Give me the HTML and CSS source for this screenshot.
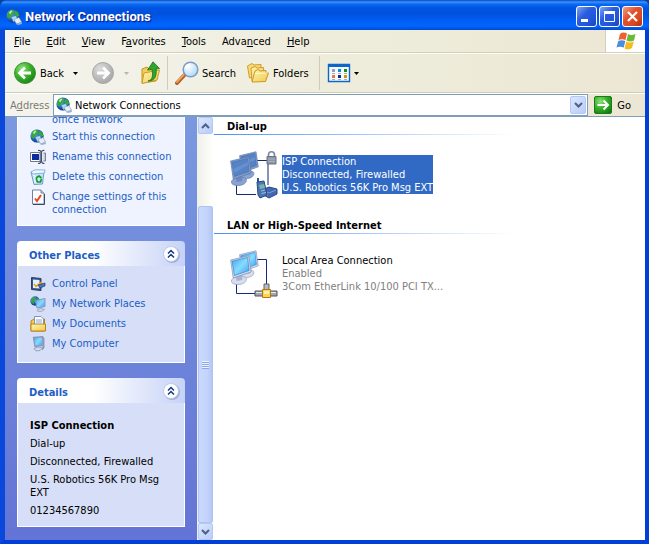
FILE: index.html
```html
<!DOCTYPE html>
<html lang="en">
<head>
<meta charset="utf-8">
<title>Network Connections</title>
<link rel="stylesheet" href="styles.css">
</head>
<body>
<svg class="defs" aria-hidden="true">
  <defs>
    <linearGradient id="gScreen" x1="0" y1="0" x2="1" y2="1"><stop offset="0" stop-color="#3fa4f2"/><stop offset=".5" stop-color="#86dcff"/><stop offset="1" stop-color="#3a9cec"/></linearGradient>
    <linearGradient id="gFolder" x1="0" y1="0" x2="1" y2="1"><stop offset="0" stop-color="#fff6b8"/><stop offset="1" stop-color="#f0c848"/></linearGradient>
    <radialGradient id="gGreen" cx=".35" cy=".3" r=".8"><stop offset="0" stop-color="#8fe07a"/><stop offset=".5" stop-color="#3bb02a"/><stop offset="1" stop-color="#0f7d10"/></radialGradient>
    <radialGradient id="gGray" cx=".35" cy=".3" r=".8"><stop offset="0" stop-color="#dcdcdc"/><stop offset="1" stop-color="#a2a2a2"/></radialGradient>
    <radialGradient id="gGlobe" cx=".3" cy=".3" r=".8"><stop offset="0" stop-color="#8cc8f4"/><stop offset=".5" stop-color="#2464c0"/><stop offset="1" stop-color="#0a2a78"/></radialGradient>
    <radialGradient id="gLens" cx=".35" cy=".3" r=".8"><stop offset="0" stop-color="#ffffff"/><stop offset="1" stop-color="#a8d6fa"/></radialGradient>
    <symbol id="globe" viewBox="0 0 16 16">
      <circle cx="7" cy="7" r="6.600" fill="url(#gGlobe)"/>
      <path d="M2 3 5 .8 8 1 7 3 8 5 5 7 4 10 1 8ZM9 1.500 12 3 13.500 7 11 8 8.500 5Z" fill="#35a83c"/>
      <path d="M3 3.500 5 1.500 6.500 2 4 5.500Z" fill="#c4f0ae"/>
      <path d="M5 8 10 6.500 12 11 7.500 13Z" fill="#a8dcfc" stroke="#4c74ac" stroke-width=".6"/>
      <path d="M8 10.500 13 8.500 15.500 13 10.500 15Z" fill="#e2effb" stroke="#7f96ba" stroke-width=".6"/>
      <path d="M10 15 15.500 13 16 15 12 16Z" fill="#9fb0ca"/>
    </symbol>
    <symbol id="chev" viewBox="0 0 19 19">
      <circle cx="10" cy="10" r="8" fill="#8d9bc9" opacity=".7"/>
      <circle cx="9" cy="9" r="7.500" fill="#fff" stroke="#c0cae8"/>
      <path d="M6 8.500 9 5.500 12 8.500M6 12.500 9 9.500 12 12.500" fill="none" stroke="#15398c" stroke-width="1.500"/>
    </symbol>
    <symbol id="monitor" viewBox="0 0 27 30" preserveAspectRatio="none">
      <path d="M2 25C4 21 17 20 20 23 21 27 16 29.500 10 29.500 4 29.500 1 28 2 25Z" fill="#d8deee" stroke="#98a2c2" stroke-width=".8"/>
      <path d="M7 20 15 19 15 25 8 26Z" fill="#aab4d0"/>
      <path d="M.8 5 23 .8 26 17 4 23Z" fill="#d4dcee" stroke="#8090b4" stroke-width=".8"/>
      <path d="M2.500 6.200 21.500 2.500 23.500 15.500 5.500 20.500Z" fill="url(#gScreen)" stroke="#2f7fc8" stroke-width=".7"/>
    </symbol>
    <symbol id="monitorSel" viewBox="0 0 27 30" preserveAspectRatio="none">
      <path d="M2 25C4 21 17 20 20 23 21 27 16 29.500 10 29.500 4 29.500 1 28 2 25Z" fill="#8aa4d2" stroke="#6580b4" stroke-width=".8"/>
      <path d="M7 20 15 19 15 25 8 26Z" fill="#6c88bc"/>
      <path d="M.8 5 23 .8 26 17 4 23Z" fill="#86a0cc" stroke="#5d78ac" stroke-width=".8"/>
      <path d="M2.500 6.200 21.500 2.500 23.500 15.500 5.500 20.500Z" fill="#5683c6" stroke="#456fb0" stroke-width=".7"/>
      <path d="M4 13 22 6 22.500 9 5 17Z" fill="#6690cf"/>
    </symbol>
  </defs>
</svg>

<header class="titlebar">
  <svg class="i16" aria-hidden="true"><use href="#globe"/></svg>
  <h1>Network Connections</h1>
  <div class="winbtns">
    <button type="button" aria-label="Minimize"><svg viewBox="0 0 19 19"><path d="M4 12H11V15H4Z" fill="#fff"/></svg></button>
    <button type="button" aria-label="Maximize"><svg viewBox="0 0 19 19"><path d="M4.500 5.500H14.500V14.500H4.500Z" fill="none" stroke="#fff"/><path d="M4 4H15V7H4Z" fill="#fff"/></svg></button>
    <button type="button" class="close" aria-label="Close"><svg viewBox="0 0 19 19"><path d="M5 5 14 14M14 5 5 14" stroke="#fff" stroke-width="2.200"/></svg></button>
  </div>
</header>

<div class="frame">
  <div class="menubar">
    <nav class="menu">
      <button type="button"><u>F</u>ile</button>
      <button type="button"><u>E</u>dit</button>
      <button type="button"><u>V</u>iew</button>
      <button type="button">F<u>a</u>vorites</button>
      <button type="button"><u>T</u>ools</button>
      <button type="button">Adva<u>n</u>ced</button>
      <button type="button"><u>H</u>elp</button>
    </nav>
    <div class="brand">
      <svg viewBox="0 0 20 20" aria-hidden="true">
        <path d="M4 3Q7 .5 11 2.500L9.500 9Q6 7.500 2.500 9Z" fill="#ee6030"/>
        <path d="M12 3Q15.500 5 19.500 3L18 9.500Q14 11.500 10.500 9.500Z" fill="#6cb838"/>
        <path d="M2.200 10Q6 8.500 9.300 10L7.800 16.500Q4 15 .5 16.500Z" fill="#4a8ee0"/>
        <path d="M10.300 10.500Q14 12.500 17.800 10.500L16 17Q12.500 19.500 8.500 17.500Z" fill="#f4bc22"/>
      </svg>
    </div>
  </div>

  <div class="toolbar">
    <button type="button" class="tool back">
      <svg class="i24" viewBox="0 0 24 24" aria-hidden="true"><circle cx="12" cy="12" r="10.500" fill="url(#gGreen)" stroke="#3c9434"/><path d="M18 12H7.500M12 6.500 6.500 12 12 17.500" fill="none" stroke="#fff" stroke-width="2.800"/></svg>
      Back
    </button>
    <button type="button" class="drop" aria-label="Back history"><svg viewBox="0 0 5 3"><path d="M0 0H5L2.500 3Z"/></svg></button>
    <button type="button" class="tool forward" aria-label="Forward" disabled>
      <svg class="i24" viewBox="0 0 24 24" aria-hidden="true"><circle cx="12" cy="12" r="10.500" fill="url(#gGray)" stroke="#a8a8a8"/><path d="M6 12H16.500M12 6.500 17.500 12 12 17.500" fill="none" stroke="#fff" stroke-width="2.800"/></svg>
    </button>
    <button type="button" class="drop off" aria-label="Forward history" disabled><svg viewBox="0 0 5 3"><path d="M0 0H5L2.500 3Z"/></svg></button>
    <button type="button" class="tool up" aria-label="Up">
      <svg class="i24" viewBox="0 0 24 24" aria-hidden="true">
        <path d="M3 8 8 6 10 8 17 7 17 20 3 22Z" fill="#f3cf58" stroke="#c79320"/>
        <path d="M5 12 20.500 9 18 19 3 22.500Z" fill="url(#gFolder)" stroke="#cd9b26"/>
        <path d="M9 20C14 19 14 14 13 8.500L8.500 9 14 .8 20.500 7.500 17 8C18 14 16 20.500 9 20Z" fill="#2fa52c" stroke="#157316" stroke-width=".8"/>
      </svg>
    </button>
    <span class="sep"></span>
    <button type="button" class="tool">
      <svg class="i24" viewBox="0 0 24 24" aria-hidden="true">
        <path d="M2 22 9 14.500" stroke="#b4602a" stroke-width="4" stroke-linecap="round"/><path d="M2 21 8.500 14" stroke="#f5a860" stroke-width="1.800" stroke-linecap="round"/>
        <circle cx="15.500" cy="8.500" r="7.300" fill="url(#gLens)" stroke="#8099c4" stroke-width="1.500"/><path d="M11 7Q12 4 15 3.500" stroke="#fff" stroke-width="1.800" fill="none"/>
      </svg>
      Search
    </button>
    <button type="button" class="tool folders">
      <svg class="i24" viewBox="0 0 24 24" aria-hidden="true">
        <path d="M1.500 5 6 2.500 8 4 15 3.500 15 13 3.500 17Z" fill="#f8dc78" stroke="#d09a28"/>
        <path d="M5 7 9 5.500 11 7 17.500 6.500 18 17 6 20Z" fill="url(#gFolder)" stroke="#d09a28"/>
        <path d="M6 21 9 10 12 8.500 14 10 20 9.500 20 12 22.500 12 19.500 20.500Z" fill="url(#gFolder)" stroke="#cf9722"/>
        <path d="M9 12.500 21.500 12" stroke="#fff9d0" fill="none"/>
      </svg>
      Folders
    </button>
    <span class="sep"></span>
    <button type="button" class="tool views" aria-label="Views">
      <svg class="i24" viewBox="0 0 24 24" aria-hidden="true">
        <path d="M1.500 3.500H22.500V20.500H1.500Z" fill="#f4faff" stroke="#0e66c8" stroke-width="1.400"/><path d="M1 3H23V6H1Z" fill="#0e66c8"/>
        <path d="M5 8H8V11H5Z" fill="#9a98d0"/><path d="M11 8H14V11H11Z" fill="#1484e6"/><path d="M17 8H20V11H17Z" fill="#0c960c"/>
        <path d="M5 14H8V17H5Z" fill="#f47440"/><path d="M11 14H14V17H11Z" fill="#08308c"/><path d="M17 14H20V17H17Z" fill="#cc9a08"/>
        <path d="M5 12.500H8M11 12.500H14M17 12.500H20M5 18.500H8M11 18.500H14M17 18.500H20" stroke="#a8acb4"/>
      </svg>
    </button>
    <button type="button" class="drop" aria-label="Choose view"><svg viewBox="0 0 5 3"><path d="M0 0H5L2.500 3Z"/></svg></button>
  </div>

  <form class="addressbar">
    <label for="addr">A<u>d</u>dress</label>
    <div class="combo">
      <svg class="i16" aria-hidden="true"><use href="#globe"/></svg>
      <input id="addr" type="text" value="Network Connections">
      <button type="button" class="sbtn" aria-label="Show addresses"><svg viewBox="0 0 9 6"><path d="M1 1 4.500 4.500 8 1" /></svg></button>
    </div>
    <button type="button" class="go">
      <svg viewBox="0 0 18 18" aria-hidden="true"><rect x=".5" y=".5" width="17" height="17" rx="1.500" fill="url(#gGreen)" stroke="#187c1a"/><path d="M3.500 9H14M9.500 4.500 14 9 9.500 13.500" fill="none" stroke="#fff" stroke-width="2"/></svg>
      Go
    </button>
  </form>

  <div class="content">
    <aside class="sidebar">
      <section class="panel tasks">
        <ul class="links">
          <li class="cut"><a href="#">office network</a></li>
          <li><svg class="i16" aria-hidden="true"><use href="#globe"/></svg><a href="#">Start this connection</a></li>
          <li><svg class="i16" viewBox="0 0 16 16" aria-hidden="true"><path d="M.5 3.500H10V12.500H.5Z" fill="#fff" stroke="#70788c"/><path d="M2 5H9V11H2Z" fill="#0a2c9c"/><path d="M8 1.500Q11 1 11 3.500V12Q11 14.500 8 14.500M14.500 1.500Q11.500 1 11.500 3.500V12Q11.500 14.500 14.500 14.500" fill="none" stroke="#48506a" stroke-width="1.200"/><path d="M13.500 4H15.500V12H13.500" fill="#c4cad8" stroke="#606880" stroke-width=".8"/></svg><a href="#">Rename this connection</a></li>
          <li><svg class="i16" viewBox="0 0 16 16" aria-hidden="true"><path d="M1 3 14 2 12.500 15 4 15.500Z" fill="#c4e4fa" stroke="#6c9cce"/><path d="M1 3 5 .8 15 1 14.500 4 3 5Z" fill="#eef8ff" stroke="#70a4d8" stroke-width=".8"/><path d="M3 6 5 7 5 14" stroke="#fff" fill="none"/><path d="M6.500 11V8.500L9 7 11.500 9M11.500 10 10.500 13 7.500 13 6.500 11" stroke="#189a28" stroke-width="1.700" fill="none"/></svg><a href="#">Delete this connection</a></li>
          <li><svg class="i16" viewBox="0 0 16 16" aria-hidden="true"><path d="M2.500 1H11L14 4V15H2.500Z" fill="#fff" stroke="#7080a8"/><path d="M11 1V4H14" fill="#c8d4ee" stroke="#7080a8"/><path d="M14.500 5V15.500H3" fill="none" stroke="#3d4868"/><path d="M5 9.500 7 12 11 6" fill="none" stroke="#ea4820" stroke-width="2"/></svg><a href="#">Change settings of this connection</a></li>
        </ul>
      </section>

      <section class="panel">
        <div class="head"><h2>Other Places</h2><button type="button" aria-label="Collapse Other Places"><svg><use href="#chev"/></svg></button></div>
        <ul class="links">
          <li><svg class="i16" viewBox="0 0 16 16" aria-hidden="true"><path d="M1.500 1.500 11 2.500V14.500L1.500 13.500Z" fill="#34558c" stroke="#28406c"/><path d="M3 3.500 9.500 4V12.500L3 12Z" fill="#dff1ff"/><path d="M4 8 6 10.500 12 6" fill="none" stroke="#f0a020" stroke-width="1.600"/><path d="M8 9 15 7V10L10 12Z" fill="#4a76b8" stroke="#243e70" stroke-width=".7"/></svg><a href="#">Control Panel</a></li>
          <li><svg class="i16" viewBox="0 0 16 16" aria-hidden="true"><circle cx="5" cy="5" r="4.700" fill="url(#gGlobe)"/><path d="M1 3 4 .7 6 2 4 5 4 8 1 6ZM7 1.500 9.500 4H7Z" fill="#35a83c"/><path d="M5.500 4.500 15 2.500V10.500L7 12Z" fill="url(#gScreen)" stroke="#8796bc"/><path d="M7 14Q11 11 14.500 13.500 12 16 8 15.500Z" fill="#d0d8ec" stroke="#8a96b8" stroke-width=".7"/></svg><a href="#">My Network Places</a></li>
          <li><svg class="i16" viewBox="0 0 16 16" aria-hidden="true"><path d="M1 5 4 3H14.500V15H1Z" fill="#f5cf58" stroke="#b88418"/><path d="M4.500.5H11L13.500 3V12H4.500Z" fill="#fff" stroke="#8094bc"/><path d="M6 4H12M6 6H12" stroke="#7aa6dc"/><path d="M1 8H15.500V15H1Z" fill="url(#gFolder)" stroke="#b88418"/></svg><a href="#">My Documents</a></li>
          <li><svg class="i16" viewBox="0 0 16 16" aria-hidden="true"><path d="M3.500 1.500 12.500.8V9.500L5 10.500Z" fill="url(#gScreen)" stroke="#8796bc" stroke-width="1.300"/><path d="M12.500 1 14 2V12L12 14" fill="#9aa5c0" stroke="#7484a4" stroke-width=".7"/><path d="M4 12.500Q8 9.500 12.500 12 11 15.500 6 15Z" fill="#d0d8ec" stroke="#8a96b8" stroke-width=".8"/></svg><a href="#">My Computer</a></li>
        </ul>
      </section>

      <section class="panel">
        <div class="head"><h2>Details</h2><button type="button" aria-label="Collapse Details"><svg><use href="#chev"/></svg></button></div>
        <div class="details">
          <p><b>ISP Connection</b></p>
          <p>Dial-up</p>
          <p>Disconnected, Firewalled</p>
          <p>U.S. Robotics 56K Pro Msg EXT</p>
          <p>01234567890</p>
        </div>
      </section>
    </aside>

    <div class="scroll">
      <button type="button" class="sbtn" aria-label="Scroll up"><svg viewBox="0 0 9 6"><path d="M1 5 4.500 1.500 8 5"/></svg></button>
      <div class="track"><div class="thumb"><span class="grip"></span></div></div>
      <button type="button" class="sbtn" aria-label="Scroll down"><svg viewBox="0 0 9 6"><path d="M1 1 4.500 4.500 8 1"/></svg></button>
    </div>

    <main>
      <section class="group">
        <h2>Dial-up</h2>
        <div class="conn selected">
          <svg class="i48" viewBox="0 0 48 48" aria-hidden="true">
            <path d="M24 9.500H38V34M6.500 27V43.500H26" fill="none" stroke="#14286c"/>
            <use href="#monitorSel" x="9" y="0" width="20" height="28"/><use href="#monitorSel" x="0" y="5" width="22" height="30"/>
            <path d="M38.500 6V4Q38.500 .8 41.500 .8 44.500 .8 44.500 4V6" fill="none" stroke="#7c88a0" stroke-width="1.600"/><path d="M37 5.500H46V13H37Z" fill="#8d97a4" stroke="#667486"/><path d="M38 8H45M38 10.500H45" stroke="#a9b1b8"/>
            <path d="M32 39 39 36 47 38 47 43 39 47 32 43Z" fill="#4468b0" stroke="#29478c"/><path d="M33 39.500 39 42 46 39" fill="none" stroke="#7c9cda"/><path d="M35 42V44M37 43V45" stroke="#7cdc78"/>
            <path d="M28 27V32" stroke="#365090" stroke-width="2"/><path d="M27 31 34 30 37 44 30 47 28 44Z" fill="#4b74b4" stroke="#294680"/><path d="M29 34 34 33 35 37 30 38Z" fill="#73b8a4"/><path d="M31 40 35 39M31.500 42.500 36 41.500" stroke="#a0bce8"/>
          </svg>
          <div class="lines"><span>ISP Connection</span><span>Disconnected, Firewalled</span><span>U.S. Robotics 56K Pro Msg EXT</span></div>
        </div>
      </section>
      <section class="group">
        <h2>LAN or High-Speed Internet</h2>
        <div class="conn">
          <svg class="i48" viewBox="0 0 48 48" aria-hidden="true">
            <path d="M24 9.500H36.500V34M6.500 27V43.500H26" fill="none" stroke="#14287c"/>
            <use href="#monitor" x="9" y="0" width="20" height="28"/><use href="#monitor" x="0" y="5" width="22" height="30"/>
            <path d="M34 34H39V40H34Z" fill="#b8bcc0" stroke="#606468"/><path d="M25 41H47V46H25Z" fill="#a4a8ac" stroke="#50545a"/><path d="M26 42.500H46" stroke="#e8eaec"/><path d="M32.500 39.500H40.500V47.500H32.500Z" fill="#fbd25c" stroke="#b07a10"/><path d="M34 41H39V44H34Z" fill="#fff0b0"/>
          </svg>
          <div class="lines"><span>Local Area Connection</span><span class="sub">Enabled</span><span class="sub">3Com EtherLink 10/100 PCI TX...</span></div>
        </div>
      </section>
    </main>
  </div>
</div>
</body>
</html>
```

FILE: styles.css
```css
* { box-sizing: border-box; }

html {
  background: #0b3f9c;
}

body {
  margin: 0;
  height: 100vh;
  display: flex;
  flex-direction: column;
  overflow: hidden;
  border-radius: 7px 7px 0 0;
  background: #0046e0;
  color: #000;
  font: 11px/13px "DejaVu Sans Condensed", "Noto Sans", sans-serif;
}

h1, h2, p, ul { margin: 0; padding: 0; }
h2 { font-size: 11px; line-height: 13px; }
svg { display: block; flex: none; }

button, input {
  margin: 0;
  padding: 0;
  border: 0;
  background: none;
  color: inherit;
  font: inherit;
}

.defs { position: absolute; width: 0; height: 0; }
.i16 { width: 16px; height: 16px; }
.i24 { width: 24px; height: 24px; }
.i48 { width: 48px; height: 48px; }

/* Title bar */
.titlebar {
  flex: none;
  height: 30px;
  padding: 3px 6px 0 6px;
  display: flex;
  align-items: center;
  gap: 3px;
  background: linear-gradient(#0a46c0 0, #3c94ff 2px, #0a6cf4 4px, #0054e0 8px, #0052dc 14px, #005cf4 20px, #0066ff 26px, #004ad0 30px);
}
.titlebar h1 {
  flex: 1;
  color: #fff;
  font: bold 13px/18px Roboto, sans-serif;
  text-shadow: 1px 1px 1px #0a1883;
}
.winbtns { display: flex; gap: 2px; }
.winbtns button {
  width: 21px;
  height: 21px;
  border: 1px solid #fff;
  border-radius: 3px;
  background: linear-gradient(135deg, #7ea4f4, #2a5ce0 40%, #2456dc 70%, #1a44b8);
}
.winbtns .close { background: linear-gradient(135deg, #f0a088, #e2502c 40%, #dc4820 70%, #b03010); }

.frame {
  flex: 1;
  min-height: 0;
  display: flex;
  flex-direction: column;
  border: solid #0040d8;
  border-width: 0 4px 4px 5px;
  border-left-color: #0a48dc;
  background: linear-gradient(90deg, #f4f4ee, #eeeddc 50%, #ece7d4);
}

/* Menu */
.menubar {
  flex: none;
  display: flex;
  justify-content: space-between;
  height: 23px;
  border-bottom: 1px solid #d4d0b8;
}
.menu { display: flex; padding-left: 1px; }
.menu button { padding: 0 8px; }
.brand {
  width: 40px;
  display: flex;
  align-items: center;
  justify-content: center;
  border-left: 1px solid #d4d0b8;
  background: #fff;
}
.brand svg { width: 20px; height: 20px; }

/* Toolbar */
.toolbar {
  flex: none;
  display: flex;
  align-items: center;
  height: 40px;
  padding-left: 8px;
  border-top: 1px solid #fff;
  border-bottom: 1px solid #d0cdb6;
}
.tool { display: flex; align-items: center; gap: 3px; }
.drop svg { width: 5px; height: 3px; }
.tool + .drop { padding: 0 13px 0 9px; }
.drop.off { fill: #b8b6a8; }
.tool + .drop.off { padding-right: 10px; }
.sep {
  width: 1px;
  height: 34px;
  margin: 0 7px 0 4px;
  background: #cfcbb8;
}
.folders { margin-left: 10px; }
.folders + .sep { margin-left: 10px; }
.views + .drop { padding: 0 0 0 3px; }

/* Address bar */
.addressbar {
  flex: none;
  display: flex;
  align-items: center;
  height: 23px;
  padding: 0 14px 0 5px;
  border-top: 1px solid #fff;
}
.addressbar label { width: 43px; color: #7d7b70; }
.combo {
  flex: 1;
  height: 22px;
  display: flex;
  align-items: center;
  gap: 3px;
  padding: 0 1px 0 2px;
  border: 1px solid #7f9db9;
  background: #fff;
}
.combo input { flex: 1; min-width: 0; outline: 0; }
.sbtn {
  flex: none;
  width: 16px;
  height: 18px;
  display: flex;
  align-items: center;
  justify-content: center;
  border: 1px solid #b4c8f4;
  border-radius: 2px;
  background: linear-gradient(135deg, #dce6ff, #b9ccf8);
}
.sbtn svg { width: 9px; height: 6px; fill: none; stroke: #4d6185; stroke-width: 2; }
.go { display: flex; align-items: center; gap: 5px; margin-left: 6px; }
.go svg { width: 18px; height: 18px; }

/* Body */
.content { flex: 1; min-height: 0; display: flex; border-top: 1px solid #7f9db9; }
.sidebar {
  flex: none;
  width: 192px;
  padding: 0 12px;
  overflow: hidden;
  background: linear-gradient(#7a98e0, #6474d6);
}
.panel { margin-bottom: 15px; }
.tasks { margin-top: -4px; }
.head {
  display: flex;
  justify-content: space-between;
  height: 25px;
  padding: 2px 4px 0 12px;
  border-radius: 4px 4px 0 0;
  background: linear-gradient(90deg, #fff 45%, #c6d3f7);
}
.head h2 { padding-top: 6px; color: #215dc6; }
.head svg { width: 19px; height: 19px; }
.links, .details { border: 1px solid #fff; border-top: 0; background: #d6dff7; }
.links {
  display: flex;
  flex-direction: column;
  gap: 4px;
  padding: 10px 10px 10px 12px;
  list-style: none;
}
.tasks .links { padding: 0 10px 9px 12px; background: #eff3ff; }
.links li { display: flex; gap: 6px; }
.links a { padding-top: 1px; color: #215dc6; text-decoration: none; }
.links .cut { height: 12px; padding-left: 22px; }
.links .cut a { padding: 0; }
.details {
  display: flex;
  flex-direction: column;
  gap: 5px;
  padding: 16px 20px 9px 12px;
}

.scroll {
  flex: none;
  width: 17px;
  display: flex;
  flex-direction: column;
  padding: 0 0 0 1px;
  border-right: 1px solid #fff;
  background: linear-gradient(90deg, #f0f0ea, #fefefb);
}
.scroll .sbtn { height: 17px; width: 15px; }
.track { flex: 1; display: flex; flex-direction: column; padding-top: 72px; }
.thumb {
  flex: 1;
  display: flex;
  align-items: center;
  justify-content: center;
  border: 1px solid #b0c4f4;
  border-radius: 2px;
  background: linear-gradient(90deg, #cad8fe, #c4d4fc 60%, #b4c8f6);
}
.grip { width: 7px; height: 8px; background: repeating-linear-gradient(#eef4ff 0 1px, #8ca8ec 1px 2px); }

main { flex: 1; min-width: 0; overflow: hidden; background: #fff; }
.group { height: 99px; }
.group h2 {
  height: 18px;
  padding: 3px 0 0 13px;
  border-bottom: 1px solid;
  border-image: linear-gradient(90deg, #4a90f0, #fff 300px) 1;
}
.conn { display: flex; align-items: flex-start; gap: 4px; padding: 16px 0 0 16px; }
.lines { display: flex; flex-direction: column; margin-top: 4px; }
.selected .lines { background: #316ac5; color: #fff; }
.sub { color: #808080; }
```
